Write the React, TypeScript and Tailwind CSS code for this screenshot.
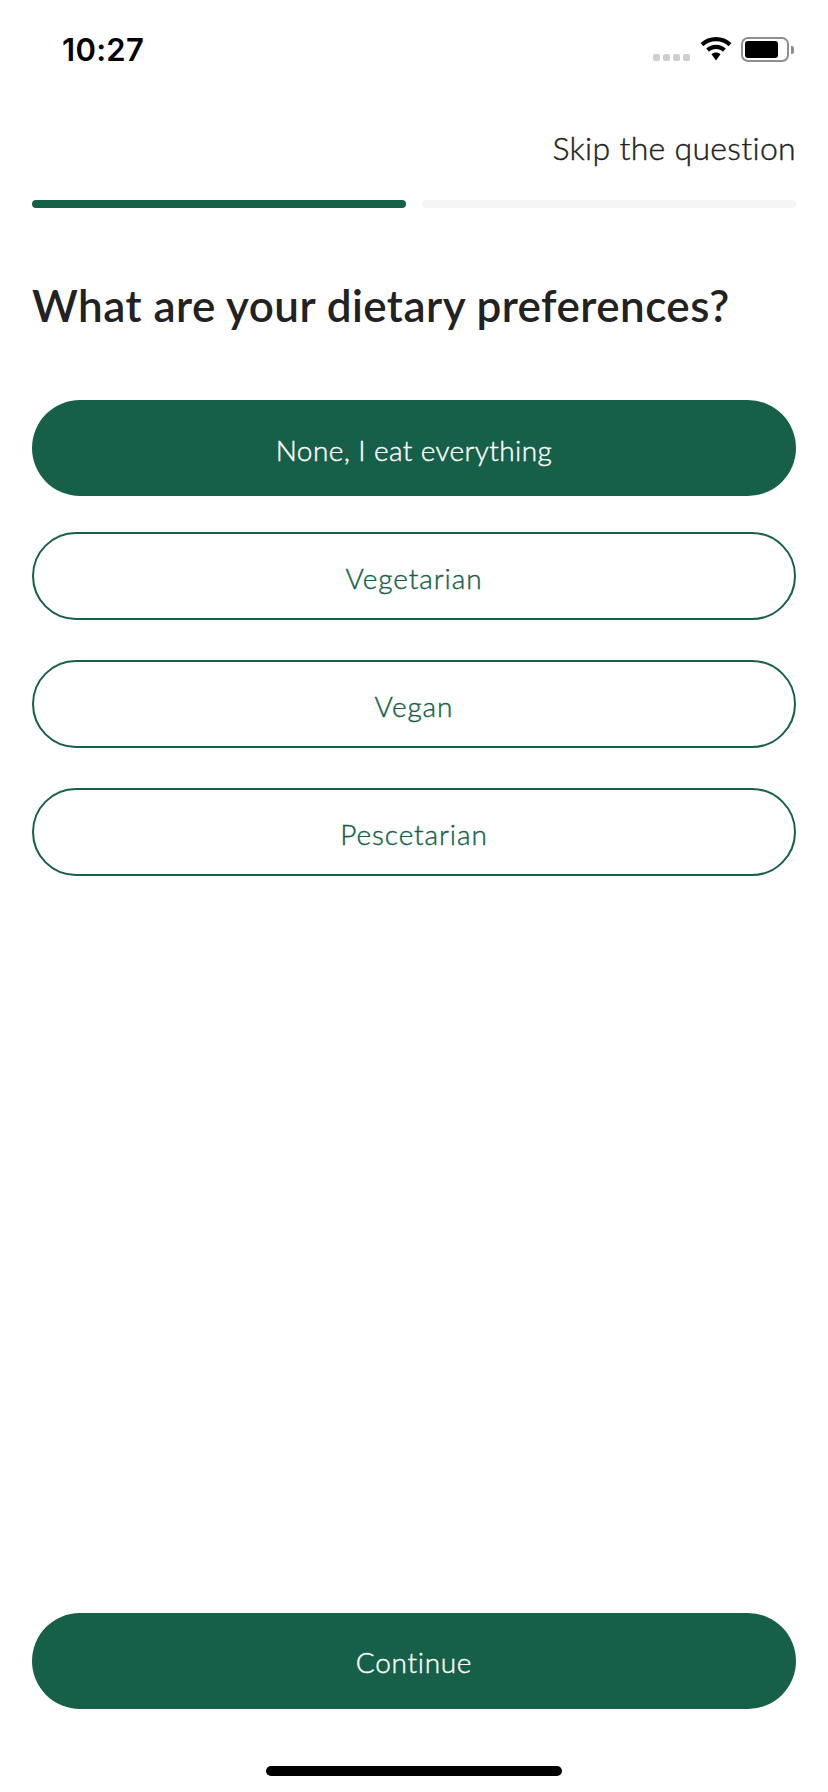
export default function App() {
  const font = "font-['Lato','Inter',sans-serif]";
  return (
    <div className={`flex h-[1792px] w-[828px] flex-col bg-white ${font}`}>
      {/* status bar */}
      <div className="flex h-[129px] shrink-0 items-start justify-between pl-[62px] pr-[34px] pt-[30px]">
        <span className="font-['Inter',sans-serif] text-[31px] font-semibold leading-[40px] tracking-[0.3px] text-black">10:27</span>
        <div className="-mt-[1px] flex items-start pt-[8px]">
          <div className="mr-[10px] mt-[17px] flex gap-[3px]">
            <span className="h-[7px] w-[7px] rounded-[2px] bg-[#cfcfcf]" />
            <span className="h-[7px] w-[7px] rounded-[2px] bg-[#cfcfcf]" />
            <span className="h-[7px] w-[7px] rounded-[2px] bg-[#cfcfcf]" />
            <span className="h-[7px] w-[7px] rounded-[2px] bg-[#cfcfcf]" />
          </div>
          <svg width="32" height="24" viewBox="0 0 32 24" className="mr-[9px]">
            <path d="M16 0C10 0 4.700 2.300 0.600 6L3.400 9.200C6.700 6.200 11.100 4.300 16 4.300C20.900 4.300 25.300 6.200 28.600 9.200L31.400 6C27.300 2.300 22 0 16 0Z" fill="#000" />
            <path d="M16 7.800C12.200 7.800 8.800 9.200 6.200 11.600L9 14.800C10.900 13.100 13.300 12.100 16 12.100C18.700 12.100 21.100 13.100 23 14.800L25.800 11.600C23.200 9.200 19.800 7.800 16 7.800Z" fill="#000" />
            <path d="M16 15.600C14.300 15.600 12.700 16.200 11.500 17.300L16 23.500L20.500 17.300C19.300 16.200 17.700 15.600 16 15.600Z" fill="#000" />
          </svg>
          <div className="flex items-center">
            <div className="flex h-[25px] w-[48px] items-center rounded-[7px] border-2 border-[#8e8e8e] pl-[2px]">
              <div className="h-[17px] w-[33px] rounded-[3px] bg-black" />
            </div>
            <div className="ml-[2px] h-[8px] w-[3px] rounded-r-[2px] bg-[#8e8e8e]" />
          </div>
        </div>
      </div>

      <div className="flex flex-1 flex-col px-8">
        <div className="flex justify-end">
          <span className="-mt-[1px] text-[32px] font-light leading-[40px] tracking-[0.3px] text-[#222222] [-webkit-text-stroke:0.4px]">Skip the question</span>
        </div>
        <div className="mt-[32px] flex gap-4">
          <div className="h-2 flex-1 rounded-full bg-[#16604a]" />
          <div className="h-2 flex-1 rounded-full bg-[#f5f5f5]" />
        </div>
        <h1 className="mt-[64px] text-[44px] font-semibold leading-[66px] tracking-[0.45px] text-[#222222]">What are your dietary preferences?</h1>

        <button className="mt-[62px] flex h-24 w-full items-center justify-center rounded-full bg-[#16604a] pt-1 text-[28px] font-light tracking-[0.4px] text-white [-webkit-text-stroke:0.4px]">None, I eat everything</button>
        <button className="mt-9 flex h-[88px] w-full items-center justify-center rounded-full border-2 border-[#16604a] pt-1 text-[28px] font-light tracking-[0.9px] text-[#16604a] [-webkit-text-stroke:0.4px]">Vegetarian</button>
        <button className="mt-10 flex h-[88px] w-full items-center justify-center rounded-full border-2 border-[#16604a] pt-1 text-[28px] font-light tracking-[0.9px] text-[#16604a] [-webkit-text-stroke:0.4px]">Vegan</button>
        <button className="mt-10 flex h-[88px] w-full items-center justify-center rounded-full border-2 border-[#16604a] pt-1 text-[28px] font-light tracking-[0.9px] text-[#16604a] [-webkit-text-stroke:0.4px]">Pescetarian</button>

        <button className="mt-auto flex h-24 w-full items-center justify-center rounded-full bg-[#16604a] pt-0.5 text-[28px] font-light tracking-[0.7px] text-white [-webkit-text-stroke:0.4px]">Continue</button>
        <div className="mb-4 mt-[57px] flex justify-center">
          <div className="h-[10px] w-[296px] rounded-full bg-black" />
        </div>
      </div>
    </div>
  );
}
